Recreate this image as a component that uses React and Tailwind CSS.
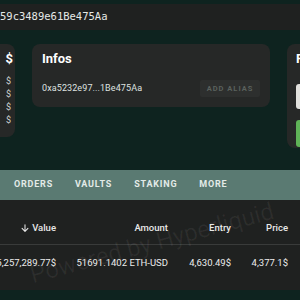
import React from 'react';

const tabs = ['ORDERS', 'VAULTS', 'STAKING', 'MORE'];
const balances = ['Spot', 'Perps', 'Vaults', 'Staked'];

const App = () => {
  return (
    <div className="relative w-[300px] h-[300px] overflow-hidden bg-[#0e231f] font-['Roboto',sans-serif]">
      {/* Address bar */}
      <div className="pt-[4px]">
        <div className="h-[26px] bg-[#1f2120] flex items-center">
          <span className="font-['DejaVu_Sans_Mono',monospace] text-[10.5px] text-[#e6e9e7] whitespace-nowrap">
            59c3489e61Be475Aa
          </span>
        </div>
      </div>

      {/* Cards */}
      <div className="mt-[14px] flex items-start gap-[17px] ml-[-125px]">
        {/* Balances card (cut off on the left) */}
        <div className="w-[140px] shrink-0 h-[93px] bg-[#262827] rounded-lg pl-[10px] pr-[2px] pt-[7px]">
          <div className="flex justify-between text-[13px] font-bold text-white leading-[15px] whitespace-nowrap">
            <span>Total</span>
            <span>$</span>
          </div>
          <div className="mt-[10px] flex flex-col gap-[3px] text-[9px] leading-[10px] text-[#cfd2d0] whitespace-nowrap">
            {balances.map((b) => (
              <div key={b} className="flex justify-between pr-[2px]">
                <span>{b}</span>
                <span>$</span>
              </div>
            ))}
          </div>
        </div>

        {/* Infos card */}
        <div className="w-[238px] shrink-0 bg-[#262827] rounded-lg px-[10px] pt-[7px] pb-[10px]">
          <div className="text-[13px] font-bold text-white leading-[15px]">Infos</div>
          <div className="mt-[14px] flex items-center justify-between">
            <span className="text-[9px] text-[#dfe2e0] tracking-[0.1px]">0xa5232e97...1Be475Aa</span>
            <button className="h-[17px] w-[60px] bg-[#2d2f2e] rounded-[2px] text-[7.5px] font-bold tracking-[1px] text-[#5a615d]">
              ADD ALIAS
            </button>
          </div>
        </div>

        {/* Right card (cut off) */}
        <div className="w-[160px] shrink-0 h-[104px] bg-[#262827] rounded-lg pl-[9px] pt-[7px]">
          <div className="text-[13px] font-bold text-white leading-[15px]">Portfolio</div>
          <div className="mt-[18px] h-[25px] bg-[#e1e1dd] rounded-[3px]" />
          <div className="mt-[11px] h-[27px] bg-[#5fb357] rounded-[3px]" />
        </div>
      </div>

      {/* Tabs */}
      <div className="mt-[22px] h-[30px] bg-[#5a7a72] flex items-center pl-[3px]">
        {tabs.map((t) => (
          <div key={t} className="px-[11px] text-[9px] font-bold tracking-[0.8px] text-[#e3ebe8]">
            {t}
          </div>
        ))}
      </div>

      {/* Table */}
      <div className="h-[90px] bg-[#1f2120] text-[9.5px]">
        <div className="h-[45px] flex items-end pb-[10px] border-b border-[#393b3a] text-[#e8e8e8] font-medium leading-[12px]">
          <div className="w-[56px] shrink-0 flex items-center justify-end gap-[2px]">
            <svg width="10" height="10" viewBox="0 0 24 24" fill="none" stroke="currentColor" strokeWidth="2.5" strokeLinecap="round" strokeLinejoin="round">
              <path d="M12 4v16M5 13l7 7 7-7" />
            </svg>
            <span>Value</span>
          </div>
          <div className="w-[112px] shrink-0 text-right">Amount</div>
          <div className="w-[63px] shrink-0 text-right">Entry</div>
          <div className="w-[57px] shrink-0 text-right">Price</div>
        </div>
        <div className="pt-[12px] flex text-[#ececec] leading-[12px] whitespace-nowrap">
          <div className="w-[56px] shrink-0 flex justify-end">5,257,289.77$</div>
          <div className="w-[112px] shrink-0 text-right">51691.1402 ETH-USD</div>
          <div className="w-[63px] shrink-0 text-right">4,630.49$</div>
          <div className="w-[57px] shrink-0 text-right">4,377.1$</div>
        </div>
      </div>

      {/* Watermark */}
      <div className="absolute left-[152px] top-[243px] -translate-x-1/2 -translate-y-1/2 -rotate-[15deg] whitespace-nowrap text-[24px] text-white/[0.06] pointer-events-none">
        Powered by Hyperliquid
      </div>
    </div>
  );
};

export default App;
